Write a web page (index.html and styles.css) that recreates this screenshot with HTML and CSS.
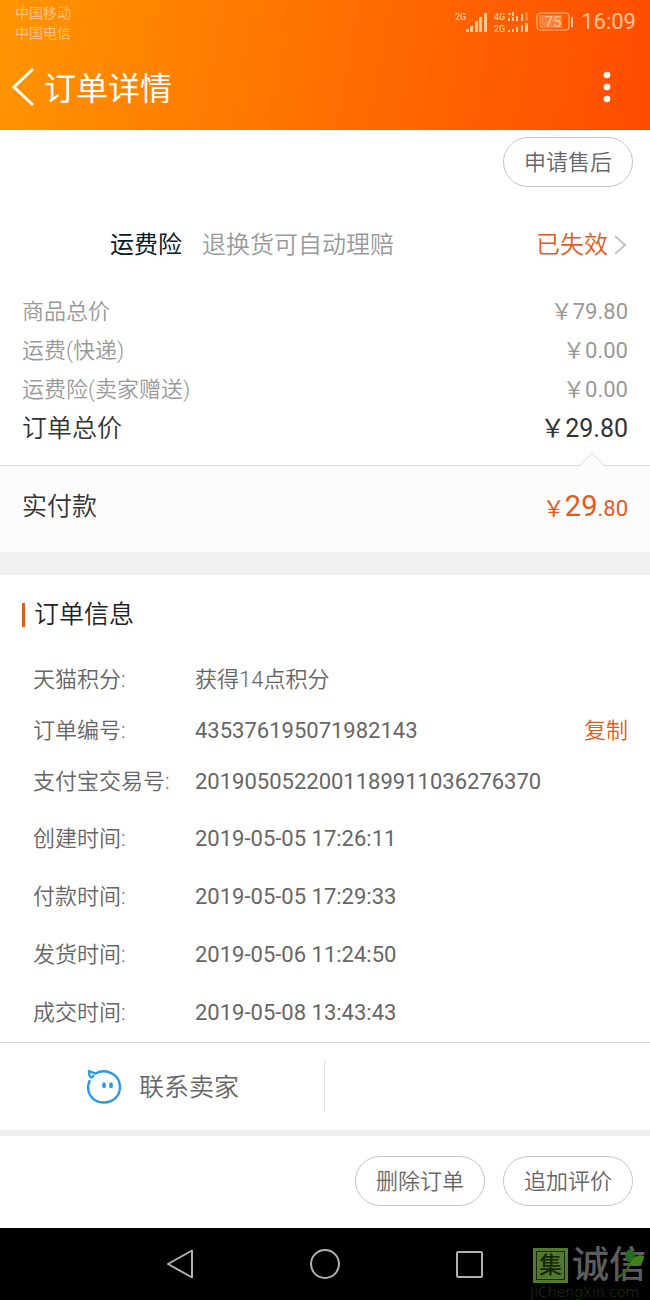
FILE: index.html
```
<!DOCTYPE html>
<html lang="zh-CN">
<head>
    <meta charset="UTF-8">
    <meta name="viewport" content="width=device-width, initial-scale=1.0">
    <title>订单详情</title>
    <link rel="stylesheet" href="styles.css">
</head>
<body>
    <header class="header">
        <div class="status-bar">
            <div class="carriers">
                <div>中国移动</div>
                <div>中国电信</div>
            </div>
            <div class="status-icons">
                <svg width="74" height="22" viewBox="0 0 74 22" fill="currentColor">
                    <text x="0" y="9" class="net">2G</text>
                    <path d="M11 18h3v3h-3zM15 15h3v6h-3zM20 10h3v11h-3zM24 6h3v15h-3zM29 2h3v19h-3z"/>
                    <text x="39" y="9" class="net">4G</text>
                    <text x="39" y="21" class="net">2G</text>
                    <path d="M53 7h2v3h-2zM57 6h2v4h-2zM61 5h2v5h-2zM66 3h2v7h-2zM53 2h3v2h-3zM57 1h2v4h-2zM53 19h2v2h-2zM57 18h2v3h-2zM61 16h2v5h-2zM66 14h2v7h-2zM70 12h3v9h-3z"/>
                    <path d="M70 1h3v9h-3z" opacity=".4"/>
                </svg>
                <svg width="38" height="20" viewBox="0 0 38 20">
                    <rect x="1" y="1" width="32" height="17" rx="3" fill="none" stroke="currentColor"/>
                    <path d="M3 3h23v13H3z" fill="currentColor" opacity=".4"/>
                    <path d="M35 5h2v10h-2z" fill="currentColor"/>
                    <text x="17" y="15" class="battery">75</text>
                </svg>
                <span class="time">16:09</span>
            </div>
        </div>
        <div class="title-bar">
            <a href="#" class="back" aria-label="返回">
                <svg width="22" height="40" viewBox="0 0 22 40" fill="none" stroke="currentColor" stroke-width="3"><path d="M21 2L2 20l19 18"/></svg>
            </a>
            <h1>订单详情</h1>
            <button type="button" class="more" aria-label="更多">
                <svg width="8" height="32" viewBox="0 0 8 32" fill="currentColor"><circle cx="4" cy="4" r="3.3"/><circle cx="4" cy="16" r="3.3"/><circle cx="4" cy="28" r="3.3"/></svg>
            </button>
        </div>
    </header>

    <main>
        <div class="after-sale">
            <button type="button" class="btn">申请售后</button>
        </div>

        <a href="#" class="insurance">
            <span class="insurance-name">运费险</span>
            <span class="insurance-desc">退换货可自动理赔</span>
            <span class="insurance-state">已失效</span>
            <svg width="12" height="20" viewBox="0 0 12 20" fill="none" stroke="#c4c4c4" stroke-width="2"><path d="M1 1l10 9-10 9"/></svg>
        </a>

        <dl class="prices">
            <div class="price-row"><dt>商品总价</dt><dd>￥79.80</dd></div>
            <div class="price-row"><dt>运费(快递)</dt><dd>￥0.00</dd></div>
            <div class="price-row"><dt>运费险(卖家赠送)</dt><dd>￥0.00</dd></div>
            <div class="price-row total"><dt>订单总价</dt><dd>￥29.80</dd></div>
        </dl>

        <div class="paid">
            <svg class="paid-arrow" width="26" height="14" viewBox="0 0 26 14"><path d="M1 13L13 1l12 12v1H1z" fill="#fcfcfc"/><path d="M0 13h1L13 1l12 12h1" fill="none" stroke="#dedede"/></svg>
            <span>实付款</span>
            <span class="paid-amount">￥<b>29</b>.80</span>
        </div>

        <section class="order-info">
            <h2>订单信息</h2>
            <dl class="info-list">
                <div class="info-row"><dt>天猫积分:</dt><dd>获得14点积分</dd></div>
                <div class="info-row"><dt>订单编号:</dt><dd class="number">435376195071982143</dd><dd class="copy"><button type="button">复制</button></dd></div>
                <div class="info-row"><dt>支付宝交易号:</dt><dd class="number">2019050522001189911036276370</dd></div>
            </dl>
            <dl class="info-list dates">
                <div class="info-row"><dt>创建时间:</dt><dd class="number">2019-05-05 17:26:11</dd></div>
                <div class="info-row"><dt>付款时间:</dt><dd class="number">2019-05-05 17:29:33</dd></div>
                <div class="info-row"><dt>发货时间:</dt><dd class="number">2019-05-06 11:24:50</dd></div>
                <div class="info-row"><dt>成交时间:</dt><dd class="number">2019-05-08 13:43:43</dd></div>
            </dl>
        </section>

        <div class="contact">
            <a href="#">
                <svg width="36" height="36" viewBox="0 0 36 36" fill="none" stroke="#2b9be0" stroke-width="2.4" stroke-linecap="round" stroke-linejoin="round">
                    <path d="M3.500 12C-1 23 6 33.500 18 33.500C27 33.500 34 27 34 18C34 5 20-1 9.500 4.500Q6 3.500 3 2Q2.500 6 5 8.500L7.500 7"/>
                    <path d="M18 15v2.500M25 15v2.500" stroke-width="3.600"/>
                </svg>
                <span>联系卖家</span>
            </a>
        </div>
    </main>

    <div class="actions">
        <button type="button" class="btn">删除订单</button>
        <button type="button" class="btn">追加评价</button>
    </div>

    <nav class="nav-bar">
        <button type="button" aria-label="返回">
            <svg width="32" height="32" viewBox="0 0 32 32"><path d="M3 16L27 2.500v27z"/></svg>
        </button>
        <button type="button" aria-label="主页">
            <svg width="32" height="32" viewBox="0 0 32 32"><circle cx="16" cy="16" r="14"/></svg>
        </button>
        <button type="button" aria-label="最近任务">
            <svg width="32" height="32" viewBox="0 0 32 32"><rect x="4" y="4" width="25" height="25" rx="1"/></svg>
        </button>
        <div class="watermark">
            <div class="mark-row">
                <span class="seal">集</span>
                <span class="mark-name">诚信</span>
            </div>
            <div class="mark-url">JiChengXin.com</div>
            <svg class="leaf" width="30" height="32" viewBox="0 0 30 32">
                <path d="M1 30Q9 26 15 15" fill="none" stroke="#396b14" stroke-width="2"/>
                <path d="M15 16C6 10 9 3 14 1c6 3 8 9 1 15z" fill="#246b1d"/>
                <path d="M14 17C17 7 24 6 28 8c0 8-6 12-14 9z" fill="#3f8220"/>
            </svg>
        </div>
    </nav>
</body>
</html>
```
FILE: styles.css
```
* {
    box-sizing: border-box;
}
body {
    margin: 0;
    font-family: Roboto, "Noto Sans CJK SC", sans-serif;
    font-size: 22px;
    font-weight: 350;
    line-height: 32px;
    color: #666;
    background-color: #fff;
}
h1, h2, dl, dd {
    margin: 0;
}
a {
    color: inherit;
    text-decoration: none;
}
button {
    padding: 0;
    border: none;
    background: none;
    color: inherit;
    font: inherit;
    cursor: pointer;
}
svg {
    display: block;
    flex: none;
}

/* 顶部 */
.header {
    height: 130px;
    color: #fff;
    background: linear-gradient(100deg, #ff9500, #ff4b00);
}
.status-bar {
    display: flex;
    justify-content: space-between;
    height: 44px;
    padding: 3px 14px 0 15px;
    color: #ffc596;
}
.carriers {
    font-size: 14px;
    line-height: 20px;
}
.status-icons {
    display: flex;
    align-items: center;
    gap: 7px;
    height: 38px;
}
.net {
    font-size: 9px;
    font-weight: 500;
}
.battery {
    font-size: 15px;
    font-weight: 400;
    text-anchor: middle;
    fill: currentColor;
}
.time {
    font-weight: 400;
}
.title-bar {
    display: flex;
    align-items: center;
    gap: 10px;
    height: 86px;
    padding: 0 39px 0 12px;
}
.title-bar h1 {
    flex: 1;
    padding-top: 3px;
    font-size: 32px;
    font-weight: 400;
    line-height: 48px;
}

.btn {
    width: 130px;
    height: 50px;
    padding-top: 2px;
    border: 1px solid #c4c4c4;
    border-radius: 25px;
    background-color: #fff;
}
.after-sale {
    display: flex;
    justify-content: flex-end;
    padding: 7px 17px 0;
}
.insurance {
    display: flex;
    align-items: center;
    margin-top: 37px;
    padding: 0 24px 0 110px;
    font-size: 24px;
    line-height: 42px;
}
.insurance-name {
    margin-right: 20px;
    font-weight: 400;
    color: #051b28;
}
.insurance-desc {
    flex: 1;
    color: #999;
}
.insurance-state {
    margin-right: 6px;
    color: #e4591c;
}

/* 价格 */
.prices {
    padding: 26px 22px 16px;
    color: #999;
}
.price-row {
    display: flex;
    justify-content: space-between;
    line-height: 39px;
}
.price-row dd {
    font-weight: 400;
}
.total {
    font-size: 25px;
    line-height: 40px;
    color: #333;
}
.paid {
    position: relative;
    display: flex;
    align-items: center;
    justify-content: space-between;
    height: 87px;
    padding: 0 22px 4px;
    border-top: 1px solid #dedede;
    background-color: #fcfcfc;
    font-size: 25px;
    color: #333;
}
.paid-arrow {
    position: absolute;
    top: -14px;
    right: 45px;
}
.paid-amount {
    font-size: 22px;
    font-weight: 400;
    color: #e4591c;
}
.paid-amount b {
    font-size: 29px;
    font-weight: 400;
}

/* 订单信息 */
.order-info {
    padding: 24px 22px 0;
    border-top: 23px solid #f0f0f0;
}
.order-info h2 {
    display: flex;
    align-items: center;
    gap: 9px;
    font-size: 25px;
    font-weight: 350;
    color: #222;
}
.order-info h2::before {
    content: "";
    width: 3px;
    height: 24px;
    background-color: #e4591c;
}
.info-list {
    padding: 23px 0 0 11px;
}
.info-row {
    display: flex;
    line-height: 51px;
}
.info-row dt {
    width: 162px;
}
.number {
    font-weight: 400;
}
.dates {
    padding-top: 3px;
}
.dates .info-row {
    line-height: 58px;
}
.copy {
    margin-left: auto;
    color: #e4591c;
}

/* 底部 */
.contact {
    display: flex;
    padding: 18px 0;
    border-top: 1px solid #d8d8d8;
    border-bottom: 6px solid #f0f0f0;
}
.contact a {
    display: flex;
    align-items: center;
    gap: 17px;
    width: 50%;
    height: 51px;
    padding-left: 86px;
    border-right: 1px solid #dedede;
    font-size: 25px;
}
.contact span {
    padding-top: 2px;
}
.actions {
    display: flex;
    justify-content: flex-end;
    gap: 18px;
    padding: 20px 17px 22px;
}
.nav-bar {
    position: relative;
    display: flex;
    align-items: center;
    justify-content: center;
    gap: 112px;
    height: 72px;
    background-color: #000;
}
.nav-bar button svg {
    fill: none;
    stroke: #b0b0b0;
    stroke-width: 2;
    stroke-linejoin: round;
}
.watermark {
    position: absolute;
    right: 0;
    bottom: 0;
    width: 120px;
}
.mark-row {
    display: flex;
    align-items: center;
    gap: 4px;
    padding-left: 3px;
}
.seal {
    width: 35px;
    height: 35px;
    border: 2px solid #54782d;
    outline: 1px solid #14290c;
    outline-offset: -4px;
    background-color: #54782d;
    color: #14290c;
    font-size: 23px;
    font-weight: 500;
    line-height: 31px;
    text-align: center;
}
.mark-name {
    color: #5c5c5c;
    font-size: 37px;
    font-weight: 500;
    line-height: 37px;
    white-space: nowrap;
}
.mark-url {
    color: #203f14;
    font-family: "DejaVu Sans", sans-serif;
    font-size: 14px;
    line-height: 16px;
}
.leaf {
    position: absolute;
    top: 1px;
    right: 4px;
}
```
